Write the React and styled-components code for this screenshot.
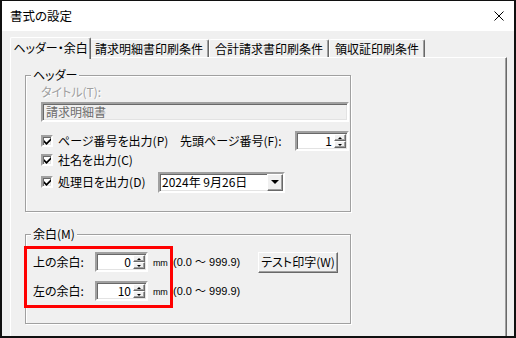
import React from "react";
import styled, { createGlobalStyle } from "styled-components";

const Global = createGlobalStyle`
  html, body { margin: 0; padding: 0; background: #fff; }
  body {
    font-family: "Noto Sans CJK JP", "Noto Sans", sans-serif;
    font-size: 12px;
    color: #000;
  }
  * { box-sizing: border-box; }
`;

const Window = styled.div`
  width: 516px;
  height: 338px;
  border: 2px solid #101010;
  border-top-width: 1px;
  background: #f0f0f0;
  display: flex;
  flex-direction: column;
  overflow: hidden;
  font-feature-settings: "palt";
`;

const TitleBar = styled.div`
  height: 30px;
  flex: none;
  background: #fff;
  display: flex;
  align-items: center;
  justify-content: space-between;
  padding: 0 10px 0 8px;
  line-height: 14px;
  font-size: 12.5px;
`;

const Body = styled.div`
  flex: 1;
  display: flex;
  flex-direction: column;
  padding: 6px 7px 0 8px;
  min-height: 0;
`;

const TabRow = styled.div`
  display: flex;
  align-items: flex-end;
  height: 20px;
  padding-left: 2px;
  flex: none;
`;

const Tab = styled.div`
  position: relative;
  z-index: ${(p) => (p.$active ? 2 : 1)};
  width: ${(p) => p.$w}px;
  height: ${(p) => (p.$active ? 22 : 18)}px;
  margin: ${(p) => (p.$active ? "0 -2px -2px -2px" : "0")};
  background: #f0f0f0;
  border-top: 1px solid #fff;
  border-left: 1px solid #fff;
  border-right: 1px solid #696969;
  box-shadow: inset -1px 0 0 #a0a0a0;
  border-radius: 2px 2px 0 0;
  display: flex;
  align-items: center;
  justify-content: center;
  padding-bottom: ${(p) => (p.$active ? 2 : 0)}px;
  line-height: 14px;
  white-space: nowrap;
`;

const Panel = styled.div`
  flex: 1;
  position: relative;
  z-index: 1;
  border-top: 1px solid #fff;
  border-left: 1px solid #fff;
  border-right: 1px solid #696969;
  box-shadow: inset -1px 0 0 #a0a0a0;
  padding: 17px 0 0 14px;
  display: flex;
  flex-direction: column;
`;

const Group = styled.div`
  position: relative;
  width: 326px;
  height: ${(p) => p.$h}px;
  margin-top: ${(p) => p.$mt || 0}px;
  border: 1px solid #a0a0a0;
  box-shadow: 1px 1px 0 #fff, inset 1px 1px 0 #fff;
  display: flex;
  flex-direction: column;
  flex: none;
`;

const Legend = styled.div`
  align-self: flex-start;
  margin: -8px 0 0 5px;
  padding: 0 2px;
  height: 14px;
  line-height: 14px;
  background: #f0f0f0;
`;

const Inner = styled.div`
  display: flex;
  flex-direction: column;
  padding-left: ${(p) => p.$pl}px;
`;

const Row = styled.div`
  display: flex;
  align-items: center;
  height: ${(p) => p.$h || 20}px;
  margin-top: ${(p) => p.$mt || 0}px;
  line-height: 14px;
  white-space: nowrap;
`;

const Cell = styled.div`
  width: ${(p) => p.$w}px;
  flex: none;
  display: flex;
  align-items: center;
  white-space: nowrap;
`;

const DisabledLabel = styled.div`
  color: #a0a0a0;
  text-shadow: 1px 1px 0 #fff;
  height: 14px;
  line-height: 14px;
  margin-top: 3px;
`;

const sunken = `
  border-style: solid;
  border-width: 2px;
  border-color: #a0a0a0 #fff #fff #a0a0a0;
  box-shadow: inset 1px 1px 0 #696969, inset -1px -1px 0 #e3e3e3;
`;

const TextBox = styled.div`
  ${sunken}
  width: 308px;
  height: 20px;
  margin-top: 3px;
  background: #f0f0f0;
  color: #6d6d6d;
  padding: 0 3px;
  display: flex;
  align-items: center;
  line-height: 14px;
`;

const CheckBox = styled.span`
  ${sunken}
  width: 12px;
  height: 12px;
  flex: none;
  background: #fff;
  display: flex;
  align-items: center;
  justify-content: center;
  margin-right: 5px;
`;

const Spinner = styled.div`
  ${sunken}
  width: ${(p) => p.$w}px;
  height: 20px;
  flex: none;
  background: #fff;
  display: flex;
  align-items: stretch;
  padding: 1px;
`;

const SpinValue = styled.div`
  flex: 1;
  padding-right: 2px;
  line-height: 14px;
  display: flex;
  align-items: center;
  justify-content: flex-end;
`;

const SpinButtons = styled.div`
  width: 12px;
  display: flex;
  flex-direction: column;
`;

const SpinBtn = styled.div`
  flex: 1;
  background: #f0f0f0;
  border-style: solid;
  border-width: 1px;
  border-color: #fff #696969 #696969 #fff;
  box-shadow: inset -1px -1px 0 #a0a0a0;
  display: flex;
  align-items: center;
  justify-content: center;
  &::after {
    content: "";
    border-left: 2px solid transparent;
    border-right: 2px solid transparent;
    ${(p) =>
      p.$up
        ? "border-bottom: 2px solid #000;"
        : "border-top: 2px solid #000;"}
    margin-right: 1px;
  }
`;

const Combo = styled.div`
  ${sunken}
  width: 127px;
  height: 21px;
  flex: none;
  background: #fff;
  display: flex;
  align-items: stretch;
  padding: 0 0 0 2px;
`;

const ComboText = styled.div`
  flex: 1;
  display: flex;
  align-items: center;
  line-height: 14px;
`;

const ComboBtn = styled.div`
  width: 16px;
  background: #f0f0f0;
  border-style: solid;
  border-width: 1px;
  border-color: #fff #696969 #696969 #fff;
  box-shadow: inset -1px -1px 0 #a0a0a0;
  display: flex;
  align-items: center;
  justify-content: center;
  &::after {
    content: "";
    border-left: 4px solid transparent;
    border-right: 4px solid transparent;
    border-top: 4px solid #000;
  }
`;

const Unit = styled.span`
  font-family: "Liberation Sans", sans-serif;
  font-size: 9px;
  letter-spacing: -0.3px;
  width: ${(p) => p.$w}px;
  padding: 2px 0 0 5px;
  flex: none;
`;

const Range = styled.span`
  width: ${(p) => p.$w}px;
  flex: none;
  font-family: "Liberation Sans", "Noto Sans CJK JP", sans-serif;
  font-size: 11px;
`;

const Button = styled.div`
  width: 80px;
  height: 21px;
  flex: none;
  background: #f0f0f0;
  border-style: solid;
  border-width: 1px;
  border-color: #fff #696969 #696969 #fff;
  box-shadow: inset -1px -1px 0 #a0a0a0;
  display: flex;
  align-items: center;
  justify-content: center;
  line-height: 14px;
`;

const Highlight = styled.div`
  position: absolute;
  left: -2px;
  top: 11px;
  width: 149px;
  height: 62px;
  border: 3px solid #ff0000;
  pointer-events: none;
`;

const Check = () => (
  <CheckBox>
    <svg width="7" height="7" viewBox="0 0 7 7">
      <path d="M0 2 L0 4.5 L2.5 7 L7 2.5 L7 0 L2.5 4.5 Z" fill="#000" />
    </svg>
  </CheckBox>
);

const Spin = ({ w, value }) => (
  <Spinner $w={w}>
    <SpinValue>{value}</SpinValue>
    <SpinButtons>
      <SpinBtn $up />
      <SpinBtn />
    </SpinButtons>
  </Spinner>
);

export default function App() {
  return (
    <>
      <Global />
      <Window>
        <TitleBar>
          <span>書式の設定</span>
          <svg width="10" height="10" viewBox="0 0 10 10">
            <path d="M0.5 0.5 L9.5 9.5 M9.5 0.5 L0.5 9.5" stroke="#000" strokeWidth="1" fill="none" />
          </svg>
        </TitleBar>
        <Body>
          <TabRow>
            <Tab $active $w={81}>ヘッダー・余白</Tab>
            <Tab $w={120}>請求明細書印刷条件</Tab>
            <Tab $w={120}>合計請求書印刷条件</Tab>
            <Tab $w={96}>領収証印刷条件</Tab>
          </TabRow>
          <Panel>
            <Group $h={137}>
              <Legend>ヘッダー</Legend>
              <Inner $pl={15}>
                <DisabledLabel>タイトル(T):</DisabledLabel>
                <TextBox>請求明細書</TextBox>
                <Row $mt={9}>
                  <Cell $w={139}>
                    <Check />
                    ページ番号を出力(P)
                  </Cell>
                  <Cell $w={115}>先頭ページ番号(F):</Cell>
                  <Spin w={54} value="1" />
                </Row>
                <Row $mt={1} $h={16}>
                  <Cell $w={139}>
                    <Check />
                    社名を出力(C)
                  </Cell>
                </Row>
                <Row $mt={4}>
                  <Cell $w={117}>
                    <Check />
                    処理日を出力(D)
                  </Cell>
                  <Combo>
                    <ComboText>2024年 9月26日</ComboText>
                    <ComboBtn />
                  </Combo>
                </Row>
              </Inner>
            </Group>
            <Group $h={90} $mt={22}>
              <Legend>余白(M)</Legend>
              <Inner $pl={7}>
                <Row $mt={11}>
                  <Cell $w={62}>上の余白:</Cell>
                  <Spin w={53} value="0" />
                  <Unit $w={25}>mm</Unit>
                  <Range $w={85}>(0.0 〜 999.9)</Range>
                  <Button>テスト印字(W)</Button>
                </Row>
                <Row $mt={9}>
                  <Cell $w={62}>左の余白:</Cell>
                  <Spin w={53} value="10" />
                  <Unit $w={25}>mm</Unit>
                  <Range $w={85}>(0.0 〜 999.9)</Range>
                </Row>
              </Inner>
              <Highlight />
            </Group>
          </Panel>
        </Body>
      </Window>
    </>
  );
}
